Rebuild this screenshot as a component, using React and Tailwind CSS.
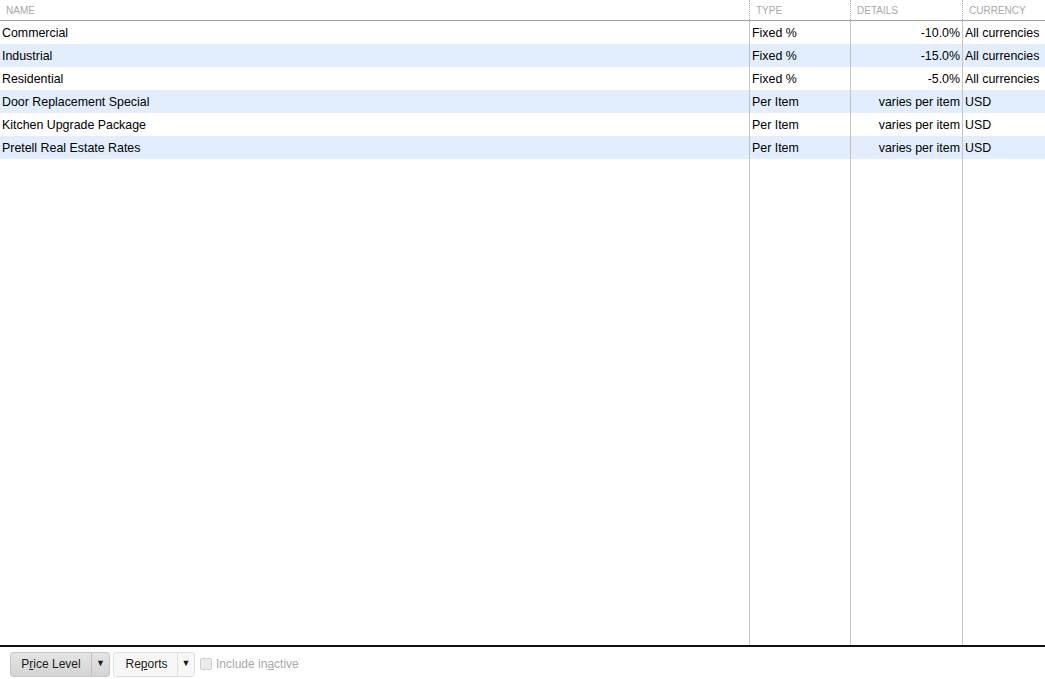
import React from 'react';

const rows = [
  { name: 'Commercial', type: 'Fixed %', details: '-10.0%', currency: 'All currencies' },
  { name: 'Industrial', type: 'Fixed %', details: '-15.0%', currency: 'All currencies' },
  { name: 'Residential', type: 'Fixed %', details: '-5.0%', currency: 'All currencies' },
  { name: 'Door Replacement Special', type: 'Per Item', details: 'varies per item', currency: 'USD' },
  { name: 'Kitchen Upgrade Package', type: 'Per Item', details: 'varies per item', currency: 'USD' },
  { name: 'Pretell Real Estate Rates', type: 'Per Item', details: 'varies per item', currency: 'USD' },
];

const cols = 'grid grid-cols-[749px_101px_112px_1fr]';

const App = () => {
  return (
    <div className="w-[1045px] h-[679px] flex flex-col bg-white text-[12.4px] text-black overflow-hidden" style={{ fontFamily: '"Liberation Sans", Arial, sans-serif' }}>
      {/* Header */}
      <div className={`${cols} h-[21px] border-b border-[#a0a0a0] text-[10px] text-[#a8a8a8] uppercase`}>
        <div className="pl-[6px] pt-[3px]">Name</div>
        <div className="pl-[6px] pt-[3px] border-l border-dotted border-[#b0b0b0]">Type</div>
        <div className="pl-[6px] pt-[3px] border-l border-dotted border-[#b0b0b0]">Details</div>
        <div className="pl-[6px] pt-[3px] border-l border-dotted border-[#b0b0b0]">Currency</div>
      </div>

      {/* Body */}
      <div className="relative flex-1 border-b-2 border-[#111]">
        <div className={`absolute inset-0 ${cols} pointer-events-none`}>
          <div></div>
          <div className="border-l border-[#c4c4c4]"></div>
          <div className="border-l border-[#c4c4c4]"></div>
          <div className="border-l border-[#c4c4c4]"></div>
        </div>
        {rows.map((r, i) => (
          <div key={r.name} className={`${cols} h-[23px] items-center pt-[2px] ${i % 2 === 1 ? 'bg-[#e2eefd]' : ''}`}>
            <div className="pl-[2px]">{r.name}</div>
            <div className="pl-[3px]">{r.type}</div>
            <div className="pr-[2px] text-right whitespace-nowrap">{r.details}</div>
            <div className="pl-[3px] whitespace-nowrap">{r.currency}</div>
          </div>
        ))}
      </div>

      {/* Footer */}
      <div className="h-[32px] flex items-start pt-[5px] pl-[10px] gap-[3px] text-[12px]">
        <div className="flex h-[25px] w-[100px] rounded-[3px] border border-[#c8c8c8] bg-gradient-to-b from-[#e4e4e4] to-[#d4d4d4] text-[#1a1a1a]">
          <div className="flex-1 flex items-center justify-center pb-[2px]">
            P<span className="underline">r</span>ice Level
          </div>
          <div className="w-[18px] flex items-center justify-center border-l border-[#c0c0c0] text-[9px] pb-[2px]">▼</div>
        </div>
        <div className="flex h-[25px] w-[82px] rounded-[3px] border border-[#e0e0e0] bg-[#f7f7f7] text-[#1a1a1a]">
          <div className="flex-1 flex items-center justify-center pb-[2px] pl-[2px]">
            Re<span className="underline">p</span>orts
          </div>
          <div className="w-[17px] flex items-center justify-center border-l border-[#e0e0e0] text-[9px] pb-[2px]">▼</div>
        </div>
        <div className="flex items-center h-[25px] ml-[2px] gap-[4px] text-[#a8a8a8] pb-[1px]">
          <div className="w-[12px] h-[12px] border border-[#cfcfcf] bg-[#ececec] rounded-[2px]"></div>
          <span>Include in<span className="underline">a</span>ctive</span>
        </div>
      </div>
    </div>
  );
};

export default App;
